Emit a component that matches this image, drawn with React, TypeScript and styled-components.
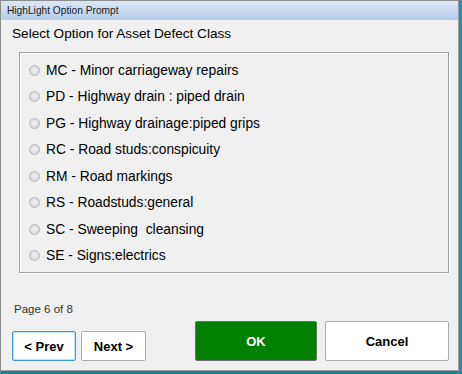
import * as React from 'react';
import styled, { createGlobalStyle } from 'styled-components';

const GlobalStyle = createGlobalStyle`
  html, body {
    margin: 0;
    padding: 0;
    background: #f0f0f0;
  }
`;

const FONT = `"Liberation Sans", Arial, sans-serif`;

const options = [
  'MC - Minor carriageway repairs',
  'PD - Highway drain : piped drain',
  'PG - Highway drainage:piped grips',
  'RC - Road studs:conspicuity',
  'RM - Road markings',
  'RS - Roadstuds:general',
  'SC - Sweeping  cleansing',
  'SE - Signs:electrics',
];

const Window = styled.div`
  width: 462px;
  height: 374px;
  box-sizing: border-box;
  display: flex;
  flex-direction: column;
  background: #f0f0f0;
  border-left: 1px solid #8c8c8c;
  border-top: 1px solid #8c8c8c;
  border-right: 3px solid #1f8fb4;
  border-bottom: 3px solid #1d7f94;
  font-family: ${FONT};
  color: #000;
`;

const TitleBar = styled.div`
  height: 19px;
  flex: none;
  display: flex;
  align-items: center;
  padding-left: 6px;
  background: linear-gradient(#dde8f5, #b5cce8);
  border-right: 1px solid #8c9cad;
  font-size: 10.2px;
  color: #1a1a1a;
`;

const Body = styled.div`
  flex: 1;
  display: flex;
  flex-direction: column;
  border-right: 1px solid #a0a0a0;
  border-bottom: 1px solid #a0a0a0;
`;

const Heading = styled.div`
  margin: 6px 0 0 11px;
  font-size: 13.6px;
  line-height: 16px;
`;

const GroupBox = styled.div`
  margin: 10px 0 0 18px;
  width: 430px;
  height: 221px;
  box-sizing: border-box;
  border: 1px solid #a0a0a0;
  box-shadow: inset 1px 1px 0 #fff, 1px 1px 0 #fff;
  padding: 4px 0 0 9px;
  display: flex;
  flex-direction: column;
`;

const OptionRow = styled.label`
  height: 26.5px;
  display: flex;
  align-items: center;
  gap: 6px;
  font-size: 13.8px;
  white-space: pre;
  cursor: pointer;
`;

const Radio = styled.span`
  width: 11px;
  height: 11px;
  box-sizing: border-box;
  border-radius: 50%;
  border: 1px solid #b8b8b8;
  background: radial-gradient(circle at 50% 45%, #f4f4f4 0%, #dcdcdc 60%, #c8c8c8 100%);
  flex: none;
`;

const PageInfo = styled.div`
  margin: 29px 0 0 13px;
  font-size: 11.5px;
  line-height: 14px;
  color: #333;
`;

const ButtonRow = styled.div`
  margin-top: auto;
  display: flex;
  align-items: flex-end;
  padding: 0 9px 9px 11px;
`;

const Group = styled.div<{ $gap: number }>`
  display: flex;
  align-items: flex-end;
  gap: ${p => p.$gap}px;
`;

const NavButton = styled.button<{ $focused?: boolean }>`
  width: ${p => (p.$focused ? 64 : 65)}px;
  height: 30px;
  box-sizing: border-box;
  background: #fff;
  border: 1px solid ${p => (p.$focused ? '#3c9bd8' : '#acacac')};
  box-shadow: ${p => (p.$focused ? 'inset 0 0 0 1px #bfe0f5' : 'none')};
  border-radius: 2px;
  font-family: ${FONT};
  font-weight: bold;
  font-size: 13px;
  color: #000;
  padding: 0;
`;

const ActionButton = styled.button<{ $primary?: boolean }>`
  width: ${p => (p.$primary ? 122 : 124)}px;
  height: 40px;
  box-sizing: border-box;
  background: ${p => (p.$primary ? '#008000' : '#fff')};
  color: ${p => (p.$primary ? '#fff' : '#000')};
  border: 1px solid ${p => (p.$primary ? '#6f6f6f' : '#acacac')};
  border-radius: 2px;
  font-family: ${FONT};
  font-weight: bold;
  font-size: 13px;
  padding: 0;
`;

const Spacer = styled.div`
  flex: 1;
`;

export default function App() {
  return (
    <>
      <GlobalStyle />
      <Window>
        <TitleBar>HighLight Option Prompt</TitleBar>
        <Body>
          <Heading>Select Option for Asset Defect Class</Heading>
          <GroupBox>
            {options.map(o => (
              <OptionRow key={o}>
                <Radio />
                <span>{o}</span>
              </OptionRow>
            ))}
          </GroupBox>
          <PageInfo>Page 6 of 8</PageInfo>
          <ButtonRow>
            <Group $gap={5}>
              <NavButton $focused>&lt; Prev</NavButton>
              <NavButton>Next &gt;</NavButton>
            </Group>
            <Spacer />
            <Group $gap={8}>
              <ActionButton $primary>OK</ActionButton>
              <ActionButton>Cancel</ActionButton>
            </Group>
          </ButtonRow>
        </Body>
      </Window>
    </>
  );
}
